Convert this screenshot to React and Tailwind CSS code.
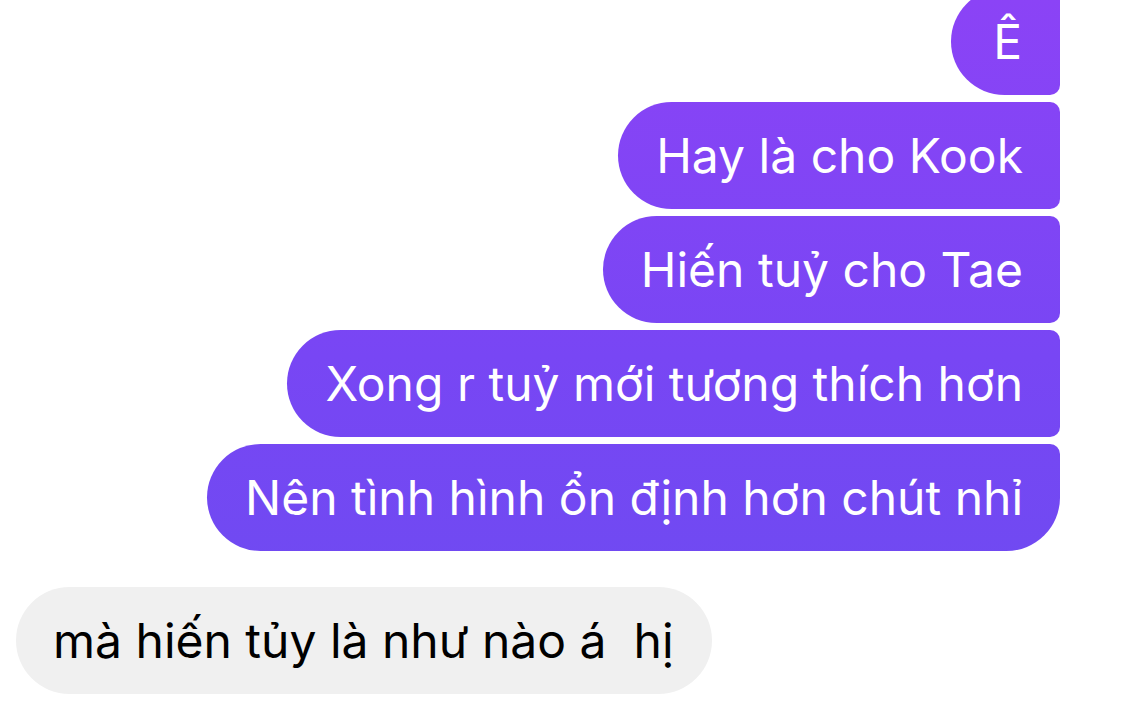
const bubble =
  "flex items-center h-[107px] text-white text-[48px] bg-fixed bg-linear-to-b from-[#8b43f6] via-[#7846f4] to-[#6a4cf0]";

const sent = [
  { text: "Ê", cls: "rounded-l-[54px] rounded-tr-[10px] rounded-br-[10px] pl-[42px] pr-[38px]" },
  { text: "Hay là cho Kook", cls: "rounded-l-[54px] rounded-r-[10px] pl-[38px] pr-[37px]" },
  { text: "Hiến tuỷ cho Tae", cls: "rounded-l-[54px] rounded-r-[10px] pl-[38px] pr-[37px]" },
  { text: "Xong r tuỷ mới tương thích hơn", cls: "rounded-l-[54px] rounded-r-[10px] pl-[38px] pr-[37px]" },
  { text: "Nên tình hình ổn định hơn chút nhỉ", cls: "rounded-l-[54px] rounded-tr-[10px] rounded-br-[54px] pl-[38px] pr-[37px]" },
];

export default function App() {
  return (
    <div
      className="w-[1132px] h-[715px] overflow-hidden bg-white"
      style={{ fontFamily: "Inter, 'Noto Sans', sans-serif" }}
    >
      <div className="-mt-[12px] flex flex-col items-end gap-[7px] pr-[72px]">
        {sent.map((m) => (
          <div key={m.text} className={`${bubble} ${m.cls}`}>
            {m.text}
          </div>
        ))}
      </div>
      <div className="mt-[36px] pl-[16px] flex">
        <div className="flex items-center h-[107px] rounded-full bg-[#f0f0f0] text-black text-[48px] pl-[37px] pr-[38px]">
          mà hiến tủy là như nào á&nbsp; hị
        </div>
      </div>
    </div>
  );
}
